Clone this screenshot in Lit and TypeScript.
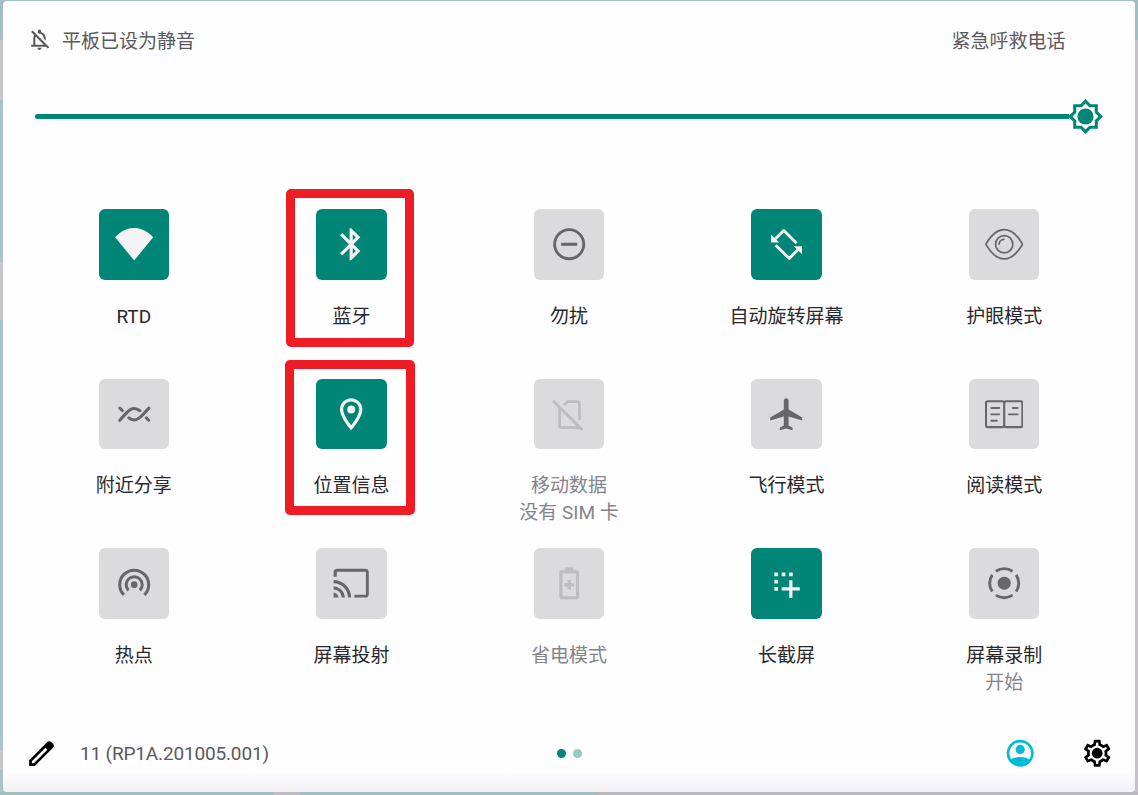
import { LitElement, html, svg, css, nothing } from "lit";
import { customElement, property } from "lit/decorators.js";
import { classMap } from "lit/directives/class-map.js";

const icons: Record<string, unknown> = {
  wifi: svg`<path d="M.1 7.7C.6 7.2 4.9 1.9 12 1.9S23.4 7.2 23.9 7.7L12.3 21.8q-.3.35-.6 0z"/>`,
  bluetooth: svg`<path d="M17.71 7.71L12 2h-1v7.59L6.41 5 5 6.41 10.59 12 5 17.59 6.41 19 11 14.41V22h1l5.71-5.71-4.3-4.29 4.3-4.29zM13 5.83l1.88 1.88L13 9.59V5.83zm1.88 10.46L13 18.17v-3.76l1.88 1.88z"/>`,
  dnd: svg`<circle cx="12" cy="12" r="9.1" fill="none" stroke="currentColor" stroke-width="1.8"/><path d="M7 11.1h10v1.9H7z"/>`,
  rotate: svg`<path fill="none" stroke="currentColor" stroke-width="1.8" stroke-linejoin="round" d="M4.6 9.2l5.9-5.8 8 8M5.4 12.7l8.5 8.2 5.9-5.9"/><path d="M2.5 6l5.1 5H2.5zM16.8 13.3h5.1v5z"/>`,
  eye: svg`<g fill="none" stroke="currentColor" stroke-width="1.05" stroke-linecap="round" stroke-linejoin="round"><path d="M.5 12C3.6 6.6 7.5 2.9 12 2.9S20.4 6.6 23.5 12C20.4 17.4 16.5 21.2 12 21.2S3.6 17.4.5 12z"/><circle cx="12" cy="12" r="5.4"/><path d="M8.8 12A3.2 3.2 0 0 1 11.8 9"/></g>`,
  nearby: svg`<g fill="none" stroke="currentColor" stroke-width="1.9" stroke-linecap="round"><path d="M3 15.8l3.9-4.3C8.9 9.3 10.2 8.4 12 8.4c1.5 0 2.4.5 3.6 1.4"/><path d="M21.2 8.2l-4 4.3c-2 2.2-3.4 3.1-5.2 3.1-1.4 0-2.3-.4-3.4-1.3"/><path d="M3 8.2l1.6 1.5M19.6 14.3l1.5 1.5"/></g>`,
  place: svg`<path d="M12 2C8.13 2 5 5.13 5 9c0 5.25 7 13 7 13s7-7.75 7-13c0-3.87-3.13-7-7-7zM7 9c0-2.76 2.24-5 5-5s5 2.24 5 5c0 2.88-2.88 7.19-5 9.88C9.92 16.21 7 11.85 7 9z"/><circle cx="12" cy="9" r="2.5"/>`,
  nosim: svg`<path fill="none" stroke="currentColor" stroke-width="1.7" stroke-linejoin="round" d="M1.9 3.6l18.3 18.3M8.9 6.2l2.1-2.1h6.2q1.2 0 1.2 1.2v10.3M6 7.6v11.6q0 1.2 1.2 1.2H18"/>`,
  plane: svg`<path d="M22 16v-2l-8.5-5V3.5C13.5 2.67 12.83 2 12 2s-1.5.67-1.5 1.5V9L2 14v2l8.5-2.5V19L8 20.5V22l4-1 4 1v-1.5L13.5 19v-5.5L22 16z"/>`,
  book: svg`<g fill="none" stroke="currentColor" stroke-width="1.35" stroke-linecap="round"><path d="M10.6 3.9H1.8Q.6 3.9.6 5.1v13.8q0 1.2 1.2 1.2h8.8q1.4 0 1.4-1.4V5.3q0-1.4-1.4-1.4zM13.4 3.9h8.8q1.2 0 1.2 1.2v13.8q0 1.2-1.2 1.2h-8.8q-1.4 0-1.4-1.4V5.3q0-1.4 1.4-1.4z"/><path stroke-width="1.2" d="M3.9 8.1h5M3.9 12.1h5M3.9 16.1h3.5M17.4 8.1h3M15 12.1h5.4"/></g>`,
  hotspot: svg`<circle cx="12" cy="12.9" r="2.1"/><g fill="none" stroke="currentColor" stroke-width="1.9"><path d="M5.6 19.3a9.05 9.05 0 1 1 12.8 0M8.45 16.45a5 5 0 1 1 7.1 0"/></g>`,
  cast: svg`<path d="M21 3H3c-1.1 0-2 .9-2 2v3h2V4.8h18.2V19.2H14V21h7c1.1 0 2-.9 2-2V5c0-1.1-.9-2-2-2zM1 18v3h3c0-1.66-1.34-3-3-3zm0-4v2c2.76 0 5 2.24 5 5h2c0-3.87-3.13-7-7-7zm0-4v2c4.97 0 9 4.03 9 9h2c0-6.08-4.93-11-11-11z"/>`,
  battery: svg`<path fill-rule="evenodd" d="M9.5 2h5v1.9h2.4q1.3 0 1.3 1.3v15.6q0 1.3-1.3 1.3H7.1q-1.3 0-1.3-1.3V5.2q0-1.3 1.3-1.3h2.4zM7.8 5.9v14.2h8.4V5.9z"/><path d="M11 10h2v2h2v2h-2v2h-2v-2H9v-2h2z"/>`,
  capture: svg`<path d="M4.6 5.3h2.3v2.3H4.6zM9.2 5.3h2.3v2.3H9.2zM13.8 5.3h2.3v2.3h-2.3zM4.6 9.9h2.3v2.3H4.6zM4.6 14.4h2.3v2.3H4.6zM13.9 10.1h2v4.5h4.6v2h-4.6v4.6h-2v-4.6H9.2v-2h4.7z"/>`,
  record: svg`<circle cx="12" cy="12" r="4.1"/><g fill="none" stroke="currentColor" stroke-width="1.8"><path d="M6.8 4.54a9.1 9.1 0 0 1 10.4 0M19.46 6.8a9.1 9.1 0 0 1 0 10.4M17.2 19.46a9.1 9.1 0 0 1-10.4 0M4.54 17.2a9.1 9.1 0 0 1 0-10.4"/></g>`,
  bellOff: svg`<path d="M12 22c1.1 0 2-.9 2-2h-4c0 1.1.9 2 2 2zm0-15.5c2.49 0 4 2.02 4 4.5v.1l2 2V11c0-3.07-1.63-5.64-4.5-6.32V4c0-.83-.67-1.5-1.5-1.5s-1.5.67-1.5 1.5v.68c-.24.06-.47.15-.69.23l1.64 1.64c.18-.02.36-.05.55-.05zM5.41 3.35L4 4.76l2.81 2.81C6.29 8.57 6 9.73 6 11v6H4v2h14.24l1.74 1.74 1.41-1.41L5.41 3.35zM16 17H8v-6c0-.68.12-1.32.34-1.9L16 16.76V17z"/>`,
  brightness: svg`<path d="M20 15.31L23.31 12 20 8.69V4h-4.69L12 .69 8.69 4H4v4.69L.69 12 4 15.31V20h4.69L12 23.31 15.31 20H20v-4.69z"/><path fill="#fefdff" d="M18 14.48V18h-3.52L12 20.48 9.52 18H6v-3.52L3.52 12 6 9.52V6h3.52L12 3.52 14.48 6H18v3.52L20.48 12z"/><circle cx="12" cy="12" r="5.25"/>`,
  edit: svg`<path d="M20.41 4.94l-1.35-1.35c-.78-.78-2.05-.78-2.83 0L3 16.82V21h4.18L20.41 7.77c.79-.78.79-2.05 0-2.83zM6.41 19.06L5 19v-1.36l9.82-9.82 1.41 1.41-9.82 9.83z"/>`,
  user: svg`<circle cx="12" cy="12" r="9" fill="none" stroke="currentColor" stroke-width="2"/><circle cx="12" cy="9.2" r="3.4"/><path d="M4 17.3C6.2 15.6 9 14.8 12 14.8s5.8.8 8 2.5C18.4 20 15.3 21.5 12 21.5S5.6 20 4 17.3z"/>`,
  gear: svg`<path d="M19.43 12.98c.04-.32.07-.64.07-.98 0-.34-.03-.66-.07-.98l2.11-1.65c.19-.15.24-.42.12-.64l-2-3.46c-.09-.16-.26-.25-.44-.25-.06 0-.12.01-.17.03l-2.49 1c-.52-.4-1.08-.73-1.69-.98l-.38-2.65C14.46 2.18 14.25 2 14 2h-4c-.25 0-.46.18-.49.42l-.38 2.65c-.61.25-1.17.59-1.69.98l-2.49-1c-.06-.02-.12-.03-.18-.03-.17 0-.34.09-.43.25l-2 3.46c-.13.22-.07.49.12.64l2.11 1.65c-.04.32-.07.65-.07.98 0 .33.03.66.07.98l-2.11 1.65c-.19.15-.24.42-.12.64l2 3.46c.09.16.26.25.44.25.06 0 .12-.01.17-.03l2.49-1c.52.4 1.08.73 1.69.98l.38 2.65c.03.24.24.42.49.42h4c.25 0 .46-.18.49-.42l.38-2.65c.61-.25 1.17-.59 1.69-.98l2.49 1c.06.02.12.03.18.03.17 0 .34-.09.43-.25l2-3.46c.12-.22.07-.49-.12-.64l-2.11-1.65zm-1.98-1.71c.04.31.05.52.05.73 0 .21-.02.43-.05.73l-.14 1.13.89.7 1.08.84-.7 1.21-1.27-.51-1.04-.42-.9.68c-.43.32-.84.56-1.25.73l-1.06.43-.16 1.13-.2 1.35h-1.4l-.19-1.35-.16-1.13-1.06-.43c-.43-.18-.83-.41-1.23-.71l-.91-.7-1.06.43-1.27.51-.7-1.21 1.08-.84.89-.7-.14-1.13c-.03-.31-.05-.54-.05-.74s.02-.43.05-.73l.14-1.13-.89-.7-1.08-.84.7-1.21 1.27.51 1.04.42.9-.68c.43-.32.84-.56 1.25-.73l1.06-.43.16-1.13.2-1.35h1.39l.19 1.35.16 1.13 1.06.43c.43.18.83.41 1.23.71l.91.7 1.06-.43 1.27-.51.7 1.21-1.07.85-.89.7.14 1.13z"/><circle cx="12" cy="12" r="4"/>`,
};

const icon = (name: string, cls: string) =>
  html`<svg class=${cls} viewBox="0 0 24 24" fill="currentColor" aria-hidden="true">${icons[name]}</svg>`;

type State = "on" | "off" | "disabled";

interface Tile {
  icon: string;
  label: string;
  sub?: string;
  state: State;
  mark?: "first" | "second";
}

const tiles: Tile[] = [
  { icon: "wifi", label: "RTD", state: "on" },
  { icon: "bluetooth", label: "蓝牙", state: "on", mark: "first" },
  { icon: "dnd", label: "勿扰", state: "off" },
  { icon: "rotate", label: "自动旋转屏幕", state: "on" },
  { icon: "eye", label: "护眼模式", state: "off" },
  { icon: "nearby", label: "附近分享", state: "off" },
  { icon: "place", label: "位置信息", state: "on", mark: "second" },
  { icon: "nosim", label: "移动数据", sub: "没有 SIM 卡", state: "disabled" },
  { icon: "plane", label: "飞行模式", state: "off" },
  { icon: "book", label: "阅读模式", state: "off" },
  { icon: "hotspot", label: "热点", state: "off" },
  { icon: "cast", label: "屏幕投射", state: "off" },
  { icon: "battery", label: "省电模式", state: "disabled" },
  { icon: "capture", label: "长截屏", state: "on" },
  { icon: "record", label: "屏幕录制", sub: "开始", state: "off" },
];

@customElement("quick-tile")
class QuickTile extends LitElement {
  @property({ attribute: false }) tile!: Tile;

  static styles = css`
    :host { display: flex; flex-direction: column; align-items: center; position: relative; }
    .box {
      width: 70.5px; height: 70.5px; border-radius: 6px; background: #dbdadc; color: #676669;
      display: flex; align-items: center; justify-content: center;
    }
    .on { background: #008577; color: #f3f2f4; }
    .disabled { color: #bdbcbe; }
    .glyph { width: 38.4px; height: 38.4px; display: block; }
    .label, .sub { line-height: 26.5px; white-space: nowrap; color: #29282b; }
    .label { margin-top: 24.3px; }
    .sub, .muted { color: #858487; }
    .mark { position: absolute; box-sizing: border-box; border: 9px solid #ee1c25; border-radius: 5px; }
    .first { left: 43.1px; top: -20.4px; width: 128px; height: 158px; }
    .second { left: 42.3px; top: -18.3px; width: 130px; height: 154.5px; }
  `;

  render() {
    const t = this.tile;
    return html`
      <div class=${classMap({ box: true, on: t.state === "on", disabled: t.state === "disabled" })}>
        ${icon(t.icon, "glyph")}
      </div>
      <div class=${classMap({ label: true, muted: t.state === "disabled" })}>${t.label}</div>
      ${t.sub ? html`<div class="sub">${t.sub}</div>` : nothing}
      ${t.mark ? html`<div class="mark ${t.mark}"></div>` : nothing}
    `;
  }
}

@customElement("app-root")
class AppRoot extends LitElement {
  static styles = css`
    :host {
      display: block; box-sizing: border-box; width: 1138px; height: 795px; padding: 1px 3px 3px; overflow: hidden;
      font-family: Roboto, "Noto Sans CJK SC", sans-serif; font-size: 19px; color: #5a595c;
      background:
        linear-gradient(90deg, #a3bfc1 0 274px, #bfbdc1 274px 300px, #a3bfc1 300px 598px, #b9b8bc 598px) 0 100% / 100% 3px no-repeat,
        linear-gradient(#a2bfc4 0 40px, #c4c2c7 40px) 100% 0 / 3px 100% no-repeat,
        linear-gradient(#a2bfc4 0 40px, #c8c6ca 40px 100px, #a9c4c5 100px 262px, #c8c6ca 262px 320px, #a9c4c5 320px 750px, #c8c6ca 750px 770px, #a9c4c5 770px) 0 0 / 3px 100% no-repeat,
        #a2bfc4;
    }
    .panel {
      box-sizing: border-box; height: 791px; border-radius: 4px; display: flex; flex-direction: column;
      background: linear-gradient(#fefdff 0 770px, #f3f1f4 791px);
    }
    .header, .slider, .grid, .footer { flex: none; }
    .header { display: flex; align-items: center; height: 76.5px; padding: 0 69.5px 0 23.5px; }
    .bell { width: 25px; height: 25px; margin-right: 10.5px; }
    .emergency { margin-left: auto; }
    .slider { display: flex; align-items: center; height: 37px; margin-top: 20.5px; padding: 0 31.5px 0 32px; color: #008577; }
    .track { flex: 1; height: 4.7px; border-radius: 3px 0 0 3px; background: #008577; margin-right: -2px; }
    .thumb { width: 37px; height: 37px; display: block; }
    .grid {
      display: grid; grid-template-columns: repeat(5, 217.6px); grid-auto-rows: 169.7px;
      margin: 74px 0 0 22px;
    }
    .footer { display: flex; align-items: center; margin-top: 0.5px; height: 69px; padding: 0 22px 0 21.5px; }
    .side { flex: 1; display: flex; align-items: center; }
    .version { letter-spacing: -0.16px; }
    .end { justify-content: flex-end; color: #000; }
    .edit { width: 33px; height: 33px; color: #000; margin-right: 22.5px; }
    .dots { display: flex; gap: 7px; margin-left: 1px; }
    .dot { width: 9px; height: 9px; border-radius: 50%; background: #94c9c4; }
    .current { background: #008577; }
    .user { width: 32.4px; height: 32.4px; color: #00bcd8; margin-right: 44.4px; }
    .gear { width: 32.4px; height: 32.4px; }
  `;

  render() {
    return html`
      <div class="panel">
        <div class="header">
          ${icon("bellOff", "bell")}
          <span>平板已设为静音</span>
          <span class="emergency">紧急呼救电话</span>
        </div>
        <div class="slider"><div class="track"></div>${icon("brightness", "thumb")}</div>
        <div class="grid">${tiles.map((t) => html`<quick-tile .tile=${t}></quick-tile>`)}</div>
        <div class="footer">
          <div class="side">${icon("edit", "edit")}<span class="version">11 (RP1A.201005.001)</span></div>
          <div class="dots"><i class="dot current"></i><i class="dot"></i></div>
          <div class="side end">${icon("user", "user")}${icon("gear", "gear")}</div>
        </div>
      </div>
    `;
  }
}
